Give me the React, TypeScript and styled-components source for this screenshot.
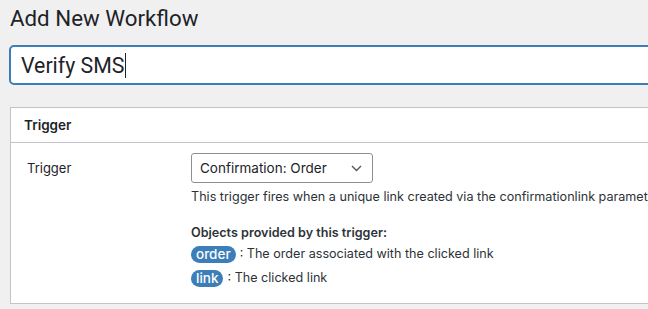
import React from "react";
import styled, { createGlobalStyle } from "styled-components";

const Global = createGlobalStyle`
  html, body { margin: 0; padding: 0; background: #f0f0f1; overflow: hidden; }
  body { font-family: Inter, "Noto Sans", sans-serif; color: #1d2327; }
`;

const Page = styled.div`
  width: 760px;
  padding: 0 0 0 10px;
  box-sizing: border-box;
`;

const Title = styled.h1`
  margin: 0;
  padding: 4px 0 0 0;
  font-family: Roboto, "Noto Sans", sans-serif;
  font-size: 22.3px;
  font-weight: 400;
  line-height: 29px;
  color: #1d2327;
`;

const TitleInput = styled.div`
  margin: 12px 0 0 -1px;
  height: 40px;
  box-sizing: border-box;
  border: 2px solid #3b7eb8;
  border-radius: 5px;
  background: #fff;
  display: flex;
  align-items: center;
  padding: 0 8px 0 10px;
  font-family: Roboto, "Noto Sans", sans-serif;
  font-size: 21.3px;
  color: #1d2327;
`;

const Caret = styled.span`
  display: inline-block;
  width: 1px;
  height: 25px;
  background: #1d2327;
  margin-left: 1px;
`;

const Panel = styled.section`
  margin-top: 22px;
  background: #fff;
  border: 1px solid #c3c4c7;
  border-right: none;
  height: 197px;
  box-sizing: border-box;
`;

const PanelHeader = styled.h2`
  margin: 0;
  height: 35px;
  box-sizing: border-box;
  border-bottom: 1px solid #c3c4c7;
  display: flex;
  align-items: center;
  padding: 0 13px;
  font-size: 13.5px;
  font-weight: 600;
`;

const Row = styled.div`
  display: flex;
  padding: 10px 0 0 16px;
`;

const Label = styled.div`
  width: 164px;
  flex: none;
  font-size: 13px;
  line-height: 18px;
  padding-top: 6px;
`;

const Field = styled.div`
  display: flex;
  flex-direction: column;
  font-size: 13px;
`;

const Select = styled.div`
  width: 182px;
  height: 30px;
  box-sizing: border-box;
  border: 1px solid #8c8f94;
  border-radius: 3px;
  display: flex;
  align-items: center;
  justify-content: space-between;
  padding: 0 10px 0 8px;
  font-size: 13.5px;
  background: #fff;
`;

const Description = styled.p`
  margin: 5px 0 0 0;
  font-size: 12.6px;
  line-height: 18px;
  white-space: nowrap;
  color: #2c3338;
`;

const ObjectsTitle = styled.p`
  margin: 18px 0 0 0;
  font-size: 12.6px;
  font-weight: 600;
  line-height: 18px;
  color: #2c3338;
`;

const ObjectRow = styled.div<{ $first?: boolean }>`
  display: flex;
  align-items: center;
  margin-top: ${(p) => (p.$first ? "3px" : "6px")};
  font-size: 12.6px;
  line-height: 18px;
  color: #2c3338;
  gap: 4px;
`;

const Badge = styled.span`
  display: inline-flex;
  align-items: center;
  height: 17px;
  padding: 0 5px;
  border-radius: 9px;
  background: #3b7eb8;
  color: #fff;
  font-size: 13.5px;
  font-weight: 500;
`;

const Chevron = () => (
  <svg width="11" height="7" viewBox="0 0 11 7" fill="none">
    <path d="M1 1l4.5 4.5L10 1" stroke="#50575e" strokeWidth="1.4" />
  </svg>
);

export default function App() {
  return (
    <>
      <Global />
      <Page>
        <Title>Add New Workflow</Title>
        <TitleInput>
          Verify SMS<Caret />
        </TitleInput>
        <Panel>
          <PanelHeader>Trigger</PanelHeader>
          <Row>
            <Label>Trigger</Label>
            <Field>
              <Select>
                Confirmation: Order
                <Chevron />
              </Select>
              <Description>
                This trigger fires when a unique link created via the confirmationlink parameter is clicked.
              </Description>
              <ObjectsTitle>Objects provided by this trigger:</ObjectsTitle>
              <ObjectRow $first>
                <Badge>order</Badge> : The order associated with the clicked link
              </ObjectRow>
              <ObjectRow>
                <Badge>link</Badge> : The clicked link
              </ObjectRow>
            </Field>
          </Row>
        </Panel>
      </Page>
    </>
  );
}
